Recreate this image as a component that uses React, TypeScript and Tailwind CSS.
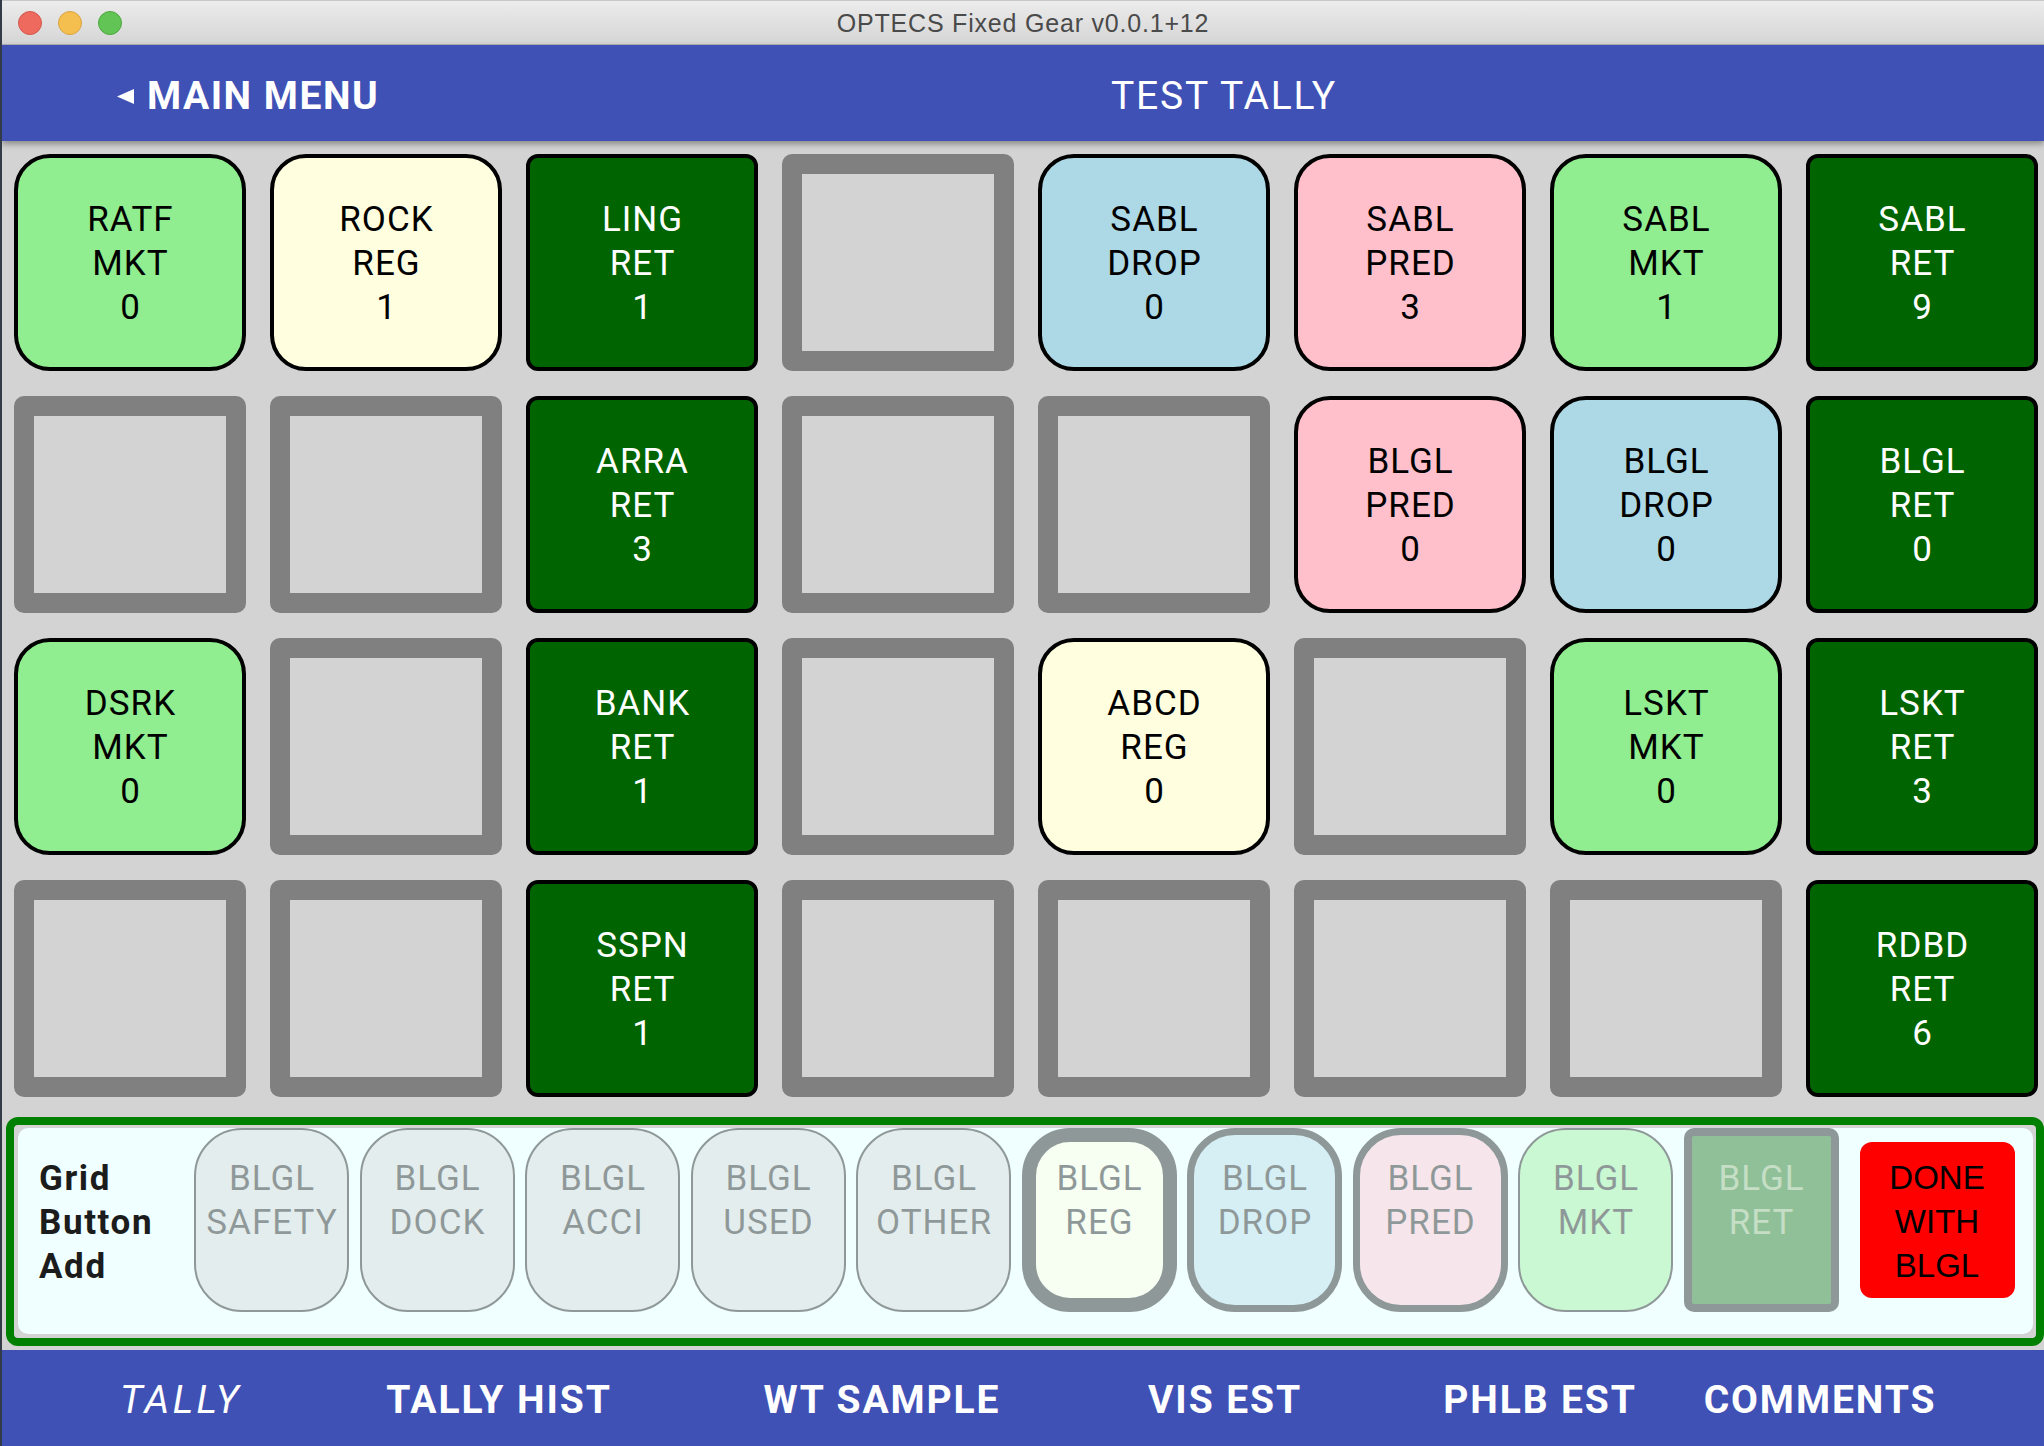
import React from "react";

type Kind = "lg" | "ly" | "lb" | "pk" | "dg";
type Cell = { a: string; b: string; n: number; k: Kind } | null;

const rows: Cell[][] = [
  [
    { a: "RATF", b: "MKT", n: 0, k: "lg" },
    { a: "ROCK", b: "REG", n: 1, k: "ly" },
    { a: "LING", b: "RET", n: 1, k: "dg" },
    null,
    { a: "SABL", b: "DROP", n: 0, k: "lb" },
    { a: "SABL", b: "PRED", n: 3, k: "pk" },
    { a: "SABL", b: "MKT", n: 1, k: "lg" },
    { a: "SABL", b: "RET", n: 9, k: "dg" },
  ],
  [
    null,
    null,
    { a: "ARRA", b: "RET", n: 3, k: "dg" },
    null,
    null,
    { a: "BLGL", b: "PRED", n: 0, k: "pk" },
    { a: "BLGL", b: "DROP", n: 0, k: "lb" },
    { a: "BLGL", b: "RET", n: 0, k: "dg" },
  ],
  [
    { a: "DSRK", b: "MKT", n: 0, k: "lg" },
    null,
    { a: "BANK", b: "RET", n: 1, k: "dg" },
    null,
    { a: "ABCD", b: "REG", n: 0, k: "ly" },
    null,
    { a: "LSKT", b: "MKT", n: 0, k: "lg" },
    { a: "LSKT", b: "RET", n: 3, k: "dg" },
  ],
  [
    null,
    null,
    { a: "SSPN", b: "RET", n: 1, k: "dg" },
    null,
    null,
    null,
    null,
    { a: "RDBD", b: "RET", n: 6, k: "dg" },
  ],
];

const kindClass: Record<Kind, string> = {
  lg: "bg-[#90ee90] rounded-[36px] text-black",
  ly: "bg-[#ffffe0] rounded-[36px] text-black",
  lb: "bg-[#add8e6] rounded-[36px] text-black",
  pk: "bg-[#ffc0cb] rounded-[36px] text-black",
  dg: "bg-[#006400] rounded-[12px] text-white",
};

function GridCell({ c }: { c: Cell }) {
  if (!c) {
    return (
      <div className="w-[232px] h-[217px] shrink-0 border-[20px] border-[#808080] rounded-[10px] bg-[#d3d3d3]" />
    );
  }
  return (
    <div
      className={`w-[232px] h-[217px] shrink-0 border-4 border-black flex flex-col items-center justify-center pt-[3px] pl-[1px] text-[35px] leading-[44px] tracking-[1px] ${kindClass[c.k]}`}
    >
      <div>{c.a}</div>
      <div>{c.b}</div>
      <div>{c.n}</div>
    </div>
  );
}

type Btn = { b: string; cls: string; text?: string };

const addButtons: Btn[] = [
  { b: "SAFETY", cls: "bg-[#d3d3d3] border-2 rounded-[48px]" },
  { b: "DOCK", cls: "bg-[#d3d3d3] border-2 rounded-[48px]" },
  { b: "ACCI", cls: "bg-[#d3d3d3] border-2 rounded-[48px]" },
  { b: "USED", cls: "bg-[#d3d3d3] border-2 rounded-[48px]" },
  { b: "OTHER", cls: "bg-[#d3d3d3] border-2 rounded-[48px]" },
  { b: "REG", cls: "bg-[#ffffe0] border-[14px] rounded-[48px]" },
  { b: "DROP", cls: "bg-[#add8e6] border-[7px] rounded-[48px]" },
  { b: "PRED", cls: "bg-[#ffc0cb] border-[7px] rounded-[48px]" },
  { b: "MKT", cls: "bg-[#90ee90] border-2 rounded-[48px]" },
  { b: "RET", cls: "bg-[#006400] border-[8px] rounded-[10px]", text: "text-[#87af70]" },
];

function AddButton({ btn }: { btn: Btn }) {
  return (
    <div
      className={`w-[155px] h-[184px] shrink-0 border-black opacity-40 flex flex-col items-center justify-center pt-[6px] pl-[1px] text-[35px] leading-[44px] tracking-[1px] ${btn.cls} ${btn.text ?? "text-black"}`}
    >
      <div className="h-[44px]">BLGL</div>
      <div className="h-[44px]">{btn.b}</div>
      <div className="h-[44px]" />
    </div>
  );
}

export default function App() {
  return (
    <div className="w-[2044px] h-[1446px] overflow-hidden flex flex-col border-l-2 border-[#343b48] bg-[#d3d3d3] font-['Roboto','Noto_Sans',sans-serif]">
      {/* Title bar */}
      <div className="h-[45px] shrink-0 grid grid-cols-[1fr_auto_1fr] items-center bg-gradient-to-b from-[#ececec] to-[#d5d5d5] border-b border-[#b1b1b1] border-t border-t-[#c8c8c8]">
        <div className="flex items-center gap-[16px] pl-[16px]">
          <div className="w-[24px] h-[24px] rounded-full bg-[#ee6a5f] border border-[#d4574c]" />
          <div className="w-[24px] h-[24px] rounded-full bg-[#f5bf4f] border border-[#d8a440]" />
          <div className="w-[24px] h-[24px] rounded-full bg-[#61c454] border border-[#4ea73f]" />
        </div>
        <div className="text-[25px] tracking-[0.8px] pt-[2px] text-[#4a4a4a] font-['Liberation_Sans',Arial,sans-serif]">
          OPTECS Fixed Gear v0.0.1+12
        </div>
        <div />
      </div>

      {/* Header */}
      <div className="relative z-10 h-[96px] shrink-0 flex items-center pt-[6px] bg-[#3f51b5] text-white shadow-[0_3px_6px_rgba(0,0,0,0.35)]">
        <div className="w-[402px] shrink-0 flex items-center pl-[115px] gap-[13px]">
          <svg width="17" height="15" viewBox="0 0 17 15">
            <polygon points="0,7.5 17,0 17,15" fill="white" />
          </svg>
          <span className="text-[39px] font-bold leading-none tracking-[1.5px]">MAIN MENU</span>
        </div>
        <div className="flex-1 flex justify-center">
          <span className="text-[39px] leading-none tracking-[1.8px]">TEST TALLY</span>
        </div>
      </div>

      {/* Grid */}
      <div className="flex flex-col gap-[25px] pt-[13px] pl-[12px] shrink-0">
        {rows.map((r, i) => (
          <div key={i} className="flex gap-[24px]">
            {r.map((c, j) => (
              <GridCell key={j} c={c} />
            ))}
          </div>
        ))}
      </div>

      {/* Add panel */}
      <div className="mt-[20px] ml-[4px] h-[229px] shrink-0 border-[8px] border-[#008000] rounded-[12px] bg-[#d3d3d3] pt-[3px] pb-[4px] pl-[4px] pr-[3px]">
        <div className="h-[206px] bg-[#f0ffff] rounded-[10px] flex items-start">
          <div className="h-[184px] flex items-center">
            <div className="w-[176px] pl-[21px] pt-[6px] shrink-0 text-[35px] leading-[44px] font-bold tracking-[1.6px] text-[#1c1c1c]">
              <div>Grid</div>
              <div>Button</div>
              <div>Add</div>
            </div>
            <div className="flex gap-[10.5px]">
              {addButtons.map((b) => (
                <AddButton key={b.b} btn={b} />
              ))}
            </div>
            <div className="ml-[21px] w-[155px] h-[156px] shrink-0 bg-[#ff0000] rounded-[12px] flex flex-col items-center justify-center pt-[4px] text-black text-[33px] leading-[44px] font-['Liberation_Sans',Arial,sans-serif]">
              <div>DONE</div>
              <div>WITH</div>
              <div>BLGL</div>
            </div>
          </div>
        </div>
      </div>

      {/* Footer */}
      <div className="mt-[4px] h-[96px] shrink-0 bg-[#3f51b5] text-white flex items-center pt-[5px] pl-[59px] text-[39px] leading-none">
        <div className="w-[240px] text-center italic tracking-[3.5px]">TALLY</div>
        <div className="ml-[78px] w-[240px] text-center font-bold tracking-[1.9px]">TALLY HIST</div>
        <div className="ml-[143px] w-[240px] text-center font-bold tracking-[1.9px]">WT SAMPLE</div>
        <div className="ml-[103px] w-[240px] text-center font-bold tracking-[1.9px]">VIS EST</div>
        <div className="ml-[75px] w-[240px] text-center font-bold tracking-[1.9px]">PHLB EST</div>
        <div className="ml-[40px] w-[240px] text-center font-bold tracking-[1.9px]">COMMENTS</div>
      </div>
    </div>
  );
}
